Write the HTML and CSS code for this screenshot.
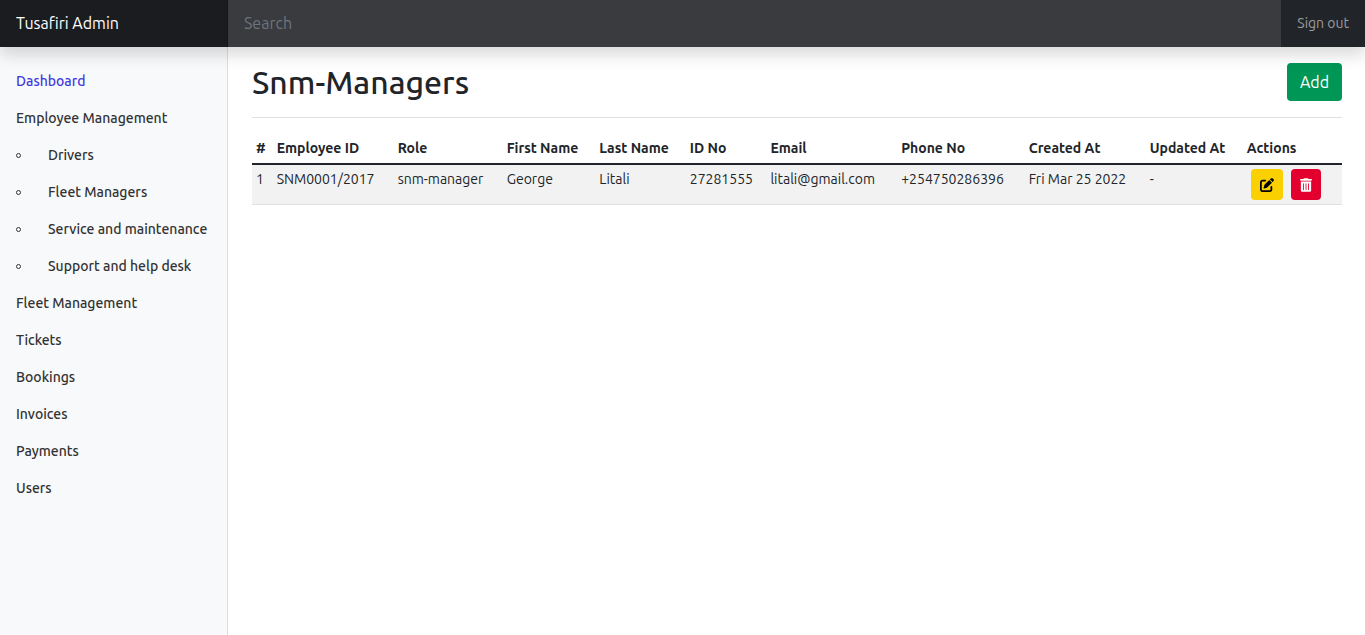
FILE: index.html
```html
<!DOCTYPE html>
<html lang="en">
<head>
<meta charset="utf-8">
<meta name="viewport" content="width=device-width, initial-scale=1">
<title>Tusafiri Admin</title>
<link rel="stylesheet" href="styles.css">
</head>
<body>
<header class="topbar">
  <a class="brand" href="#">Tusafiri Admin</a>
  <input class="search" type="text" placeholder="Search" aria-label="Search">
  <a class="signout" href="#">Sign out</a>
</header>
<div class="layout">
  <nav class="sidebar" aria-label="Main">
    <ul class="nav">
      <li><a class="link active" href="#">Dashboard</a></li>
      <li><a class="link" href="#">Employee Management</a>
        <ul class="subnav">
          <li><a class="link" href="#">Drivers</a></li>
          <li><a class="link" href="#">Fleet Managers</a></li>
          <li><a class="link" href="#">Service and maintenance</a></li>
          <li><a class="link" href="#">Support and help desk</a></li>
        </ul>
      </li>
      <li><a class="link" href="#">Fleet Management</a></li>
      <li><a class="link" href="#">Tickets</a></li>
      <li><a class="link" href="#">Bookings</a></li>
      <li><a class="link" href="#">Invoices</a></li>
      <li><a class="link" href="#">Payments</a></li>
      <li><a class="link" href="#">Users</a></li>
    </ul>
  </nav>
  <main class="content">
    <div class="heading">
      <h1>Snm-Managers</h1>
      <button class="btn add" type="button">Add</button>
    </div>
    <table class="table">
      <colgroup>
        <col class="c-num"><col class="c-emp"><col class="c-role"><col class="c-first"><col class="c-last"><col class="c-id"><col class="c-email"><col class="c-phone"><col class="c-created"><col class="c-updated"><col class="c-actions">
      </colgroup>
      <thead>
        <tr><th>#</th><th>Employee ID</th><th>Role</th><th>First Name</th><th>Last Name</th><th>ID No</th><th>Email</th><th>Phone No</th><th>Created At</th><th>Updated At</th><th>Actions</th></tr>
      </thead>
      <tbody>
        <tr>
          <td>1</td><td>SNM0001/2017</td><td>snm-manager</td><td>George</td><td>Litali</td><td>27281555</td><td>litali@gmail.com</td><td>+254750286396</td><td>Fri Mar 25 2022</td><td>-</td>
          <td>
            <div class="actions">
              <button class="btn icon edit" type="button" aria-label="Edit"><svg width="14" height="14" viewBox="0 0 512 512" fill="currentColor" aria-hidden="true"><path d="M471.6 21.7c-21.9-21.9-57.3-21.9-79.2 0L362.3 51.7l97.9 97.9 30.1-30.1c21.9-21.9 21.9-57.3 0-79.2L471.6 21.7zm-299.2 220c-6.1 6.1-10.8 13.6-13.5 21.9l-29.6 88.8c-2.9 8.6-.6 18.1 5.8 24.6s15.9 8.7 24.6 5.8l88.8-29.6c8.2-2.7 15.7-7.4 21.9-13.5L437.7 172.3 339.7 74.3 172.4 241.7zM96 64C43 64 0 107 0 160V416c0 53 43 96 96 96H352c53 0 96-43 96-96V320c0-17.7-14.3-32-32-32s-32 14.3-32 32v96c0 17.7-14.3 32-32 32H96c-17.7 0-32-14.3-32-32V160c0-17.7 14.3-32 32-32h96c17.7 0 32-14.3 32-32s-14.3-32-32-32H96z"/></svg></button>
              <button class="btn icon delete" type="button" aria-label="Delete"><svg width="12" height="14" viewBox="0 0 448 512" fill="currentColor" aria-hidden="true"><path fill-rule="evenodd" d="M135.2 17.7L128 32H32C14.3 32 0 46.3 0 64S14.3 96 32 96H416c17.7 0 32-14.3 32-32s-14.3-32-32-32H320l-7.2-14.3C307.4 6.8 296.3 0 284.2 0H163.8c-12.1 0-23.2 6.8-28.6 17.7zM32 128H416V448c0 35.300-28.700 64-64 64H96c-35.300 0-64-28.700-64-64V128zm96 64c-8.800 0-16 7.200-16 16V432c0 8.800 7.200 16 16 16s16-7.200 16-16V208c0-8.800-7.200-16-16-16zm96 0c-8.800 0-16 7.200-16 16V432c0 8.800 7.200 16 16 16s16-7.200 16-16V208c0-8.800-7.200-16-16-16zm96 0c-8.800 0-16 7.200-16 16V432c0 8.800 7.200 16 16 16s16-7.200 16-16V208c0-8.800-7.200-16-16-16z"/></svg></button>
            </div>
          </td>
        </tr>
      </tbody>
    </table>
  </main>
</div>
</body>
</html>
```
FILE: styles.css
```css
*, *::before, *::after { box-sizing: border-box; }

body {
  margin: 0;
  min-height: 100vh;
  display: flex;
  flex-direction: column;
  background: #fff;
  color: #212529;
  font-family: Ubuntu, "Noto Sans", "Open Sans", sans-serif;
  font-size: 16px;
  line-height: 24px;
}

a { color: inherit; text-decoration: none; }
ul { list-style: none; margin: 0; padding: 0; }

.topbar {
  position: sticky;
  top: 0;
  z-index: 1;
  display: flex;
  height: 47px;
  background: #212529;
  box-shadow: 0 8px 16px rgba(0, 0, 0, .15);
}
.brand {
  width: 16.7%;
  padding: 11px 16px;
  background: #1a1c1f;
  box-shadow: inset -1px 0 0 rgba(0, 0, 0, .25);
  color: #fff;
}
.search {
  flex: 1;
  min-width: 0;
  padding: 11px 16px 12px;
  border: 0;
  background: #3a3b3f;
  color: #fff;
  font: inherit;
}
.search::placeholder { color: #6c757d; opacity: 1; }
.signout {
  padding: 11px 16px;
  color: #9b9d9f;
  font-size: 14px;
}

.layout { flex: 1; display: flex; }
.sidebar {
  width: 16.7%;
  padding-top: 16px;
  background: #f8f9fb;
  border-right: 1px solid #dcdee0;
  font-size: 14px;
  font-weight: 500;
  line-height: 21px;
}
.link { display: block; padding: 8px 16px; color: #333; white-space: nowrap; }
.active { color: #4338e0; }
.subnav li { display: flex; align-items: center; padding-left: 16px; }
.subnav li::before {
  content: "";
  width: 5px;
  height: 5px;
  margin-right: 11px;
  border: 1px solid #333;
  border-radius: 50%;
}

.content { flex: 1; min-width: 0; padding: 16px 23px 0 24px; }
.heading {
  display: flex;
  justify-content: space-between;
  align-items: flex-start;
  padding-bottom: 16px;
  margin-bottom: 16px;
  border-bottom: 1px solid #dee2e6;
}
h1 { margin: 0; font-size: 32px; font-weight: 500; line-height: 38px; }

.btn { border: 0; border-radius: 4px; font: inherit; }
.add { padding: 7px 13px; background: #009655; color: #fff; }

.table {
  width: 100%;
  table-layout: fixed;
  border-collapse: collapse;
  font-size: 14px;
  line-height: 21px;
}
.table th, .table td { padding: 4px; text-align: left; vertical-align: top; white-space: nowrap; }
.table th { font-weight: 700; border-bottom: 2px solid #212529; }
.table td { background: #f2f2f2; border-bottom: 1px solid #dee2e6; }
.c-num { width: 1.9%; }
.c-emp { width: 11.1%; }
.c-role { width: 10%; }
.c-first { width: 8.5%; }
.c-last { width: 8.3%; }
.c-id { width: 7.4%; }
.c-email { width: 12%; }
.c-phone { width: 11.7%; }
.c-created { width: 11.1%; }
.c-updated { width: 8.9%; }

.actions { display: flex; gap: 8px; padding-left: 4px; }
.icon { display: flex; align-items: center; padding: 0 9px; height: 31px; }
.edit { background: #fbd000; color: #000; }
.delete { background: #e3002f; color: #fff; }
```
